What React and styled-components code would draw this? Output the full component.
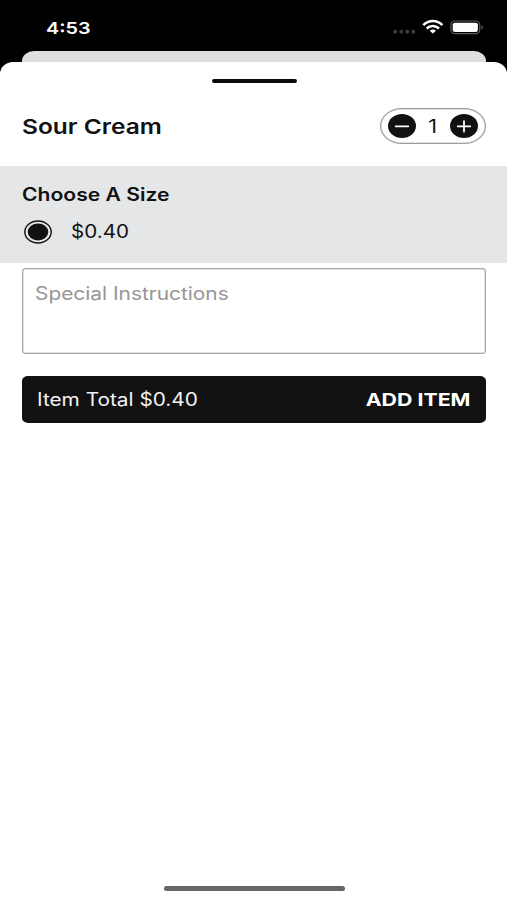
import React from "react";
import styled, { createGlobalStyle } from "styled-components";

const GlobalStyle = createGlobalStyle`
  * { box-sizing: border-box; }
  body { margin: 0; background: #000; font-family: Inter, "Liberation Sans", sans-serif; }
`;

const Screen = styled.div`
  height: 900px;
  display: flex;
  flex-direction: column;
  background: #000;
  overflow: hidden;
`;

const Label = styled.span`
  display: block;
  white-space: nowrap;
  font-size: ${(p) => p.$size}px;
  line-height: 24px;
  font-weight: ${(p) => p.$weight || 400};
  color: ${(p) => p.$color || "#111"};
  transform: scaleX(${(p) => p.$stretch || 1.2});
  transform-origin: ${(p) => p.$origin || "left"} center;
`;

const StatusBar = styled.header`
  height: 51px;
  flex: none;
  display: flex;
  justify-content: space-between;
  align-items: flex-start;
  padding: 16px 23px 0 46px;
`;

const StatusIcons = styled.div`
  display: flex;
  svg { display: block; }
`;

const BackCard = styled.div`
  height: 11px;
  flex: none;
  margin: 0 21px 0 22px;
  border-radius: 12px 12px 0 0 / 10px 10px 0 0;
  background: #dfdfdf;
`;

const Sheet = styled.main`
  flex: 1;
  display: flex;
  flex-direction: column;
  background: #fff;
  border-radius: 13px 13px 0 0 / 12px 12px 0 0;
`;

const Grabber = styled.div`
  width: 85px;
  height: 4px;
  margin: 17px 0 0 212px;
  border-radius: 2px;
  background: #0b0b0b;
`;

const TitleRow = styled.div`
  height: 83px;
  display: flex;
  justify-content: space-between;
  align-items: flex-start;
  padding: 25px 21px 0 22px;
`;

const Title = styled.div`
  padding-top: 7px;
`;

const Stepper = styled.div`
  width: 106px;
  height: 36px;
  display: flex;
  align-items: center;
  justify-content: space-between;
  padding: 0 7px;
  border: 1px solid #9c9c9c;
  border-radius: 22px / 18px;
  box-shadow: inset 0 0 0 0.5px #c4c4c4;
`;

const Quantity = styled.div`
  padding-top: 2px;
`;

const StepButton = styled.button`
  width: 28px;
  height: 24px;
  padding: 0;
  border: 0;
  border-radius: 50%;
  background: #111;
  svg { display: block; }
`;

const SizeSection = styled.section`
  height: 97px;
  padding: 17px 22px 0;
  background: #e4e6e8;
`;

const Option = styled.div`
  display: flex;
  align-items: center;
  gap: 19px;
  margin-top: 13px;
  padding-left: 2px;
`;

const Radio = styled.svg`
  display: block;
  width: 28px;
  height: 24px;
`;

const Instructions = styled.div`
  height: 86px;
  margin: 5px 21px 0 22px;
  padding: 13px 12px;
  border: 1px solid #a6a6a6;
  border-radius: 4px / 3px;
  box-shadow: inset 0 0 0 0.5px #c8c8c8;
`;

const AddButton = styled.button`
  height: 47px;
  margin: 22px 21px 0 22px;
  padding: 0 16px 0 15px;
  display: flex;
  justify-content: space-between;
  align-items: center;
  border: 0;
  border-radius: 6px / 5px;
  background: #111;
  font-family: inherit;
`;

const HomeIndicator = styled.div`
  width: 181px;
  height: 5px;
  margin: auto 0 9px 164px;
  border-radius: 3px;
  background: #666;
`;

function Status() {
  return (
    <StatusIcons>
      <svg width="92" height="24" viewBox="0 0 92 24">
        <g fill="#3c3c3c">
          <circle cx="3.2" cy="15.8" r="2" />
          <circle cx="9.2" cy="15.8" r="2" />
          <circle cx="15.3" cy="15.8" r="2" />
          <circle cx="21.3" cy="15.8" r="2" />
        </g>
        <g fill="none" stroke="#fff" strokeWidth="2.5">
          <path d="M31.3 9.2C36.7 3.7 45 3.7 50.4 9.2" />
          <path d="M34.7 12.5C38.3 9 43.4 9 47 12.5" />
        </g>
        <path d="M37.7 14.8C39.4 13.2 42.3 13.2 44 14.8L40.9 17.4Z" fill="#fff" />
        <rect x="58.9" y="5" width="28.8" height="12.6" rx="4.4" ry="3.7" fill="none" stroke="#5c5c5c" strokeWidth="1.2" />
        <rect x="60.7" y="6.7" width="25.2" height="9.2" rx="2.2" ry="1.9" fill="#fff" />
        <path d="M89.4 9.2Q91 10 91 11.3T89.4 13.4Z" fill="#5c5c5c" />
      </svg>
    </StatusIcons>
  );
}

function StepIcon({ plus }) {
  return (
    <svg width="28" height="24" viewBox="0 0 28 24" fill="none" stroke="#fff" strokeWidth="1.8" strokeLinecap="round">
      <path d="M7.7 12.3H20.3" />
      {plus && <path d="M14 7.1V17.5" />}
    </svg>
  );
}

export default function App() {
  return (
    <>
      <GlobalStyle />
      <Screen>
        <StatusBar>
          <Label $size={16.5} $weight={600} $color="#fff">4:53</Label>
          <Status />
        </StatusBar>
        <BackCard />
        <Sheet>
          <Grabber />
          <TitleRow>
            <Title>
              <Label $size={20.5} $weight={600} $stretch={1.195}>Sour Cream</Label>
            </Title>
            <Stepper>
              <StepButton aria-label="Decrease"><StepIcon /></StepButton>
              <Quantity>
                <Label $size={18} $origin="center">1</Label>
              </Quantity>
              <StepButton aria-label="Increase"><StepIcon plus /></StepButton>
            </Stepper>
          </TitleRow>
          <SizeSection>
            <Label $size={18} $weight={600} $stretch={1.172}>Choose A Size</Label>
            <Option>
              <Radio viewBox="0 0 28 24">
                <ellipse cx="14" cy="12" rx="13.2" ry="11" fill="none" stroke="#111" strokeWidth="1.4" />
                <ellipse cx="14" cy="12" rx="10.3" ry="8.5" fill="#111" />
              </Radio>
              <Label $size={18} $stretch={1.145}>$0.40</Label>
            </Option>
          </SizeSection>
          <Instructions>
            <Label $size={18} $stretch={1.16} $color="#969696">Special Instructions</Label>
          </Instructions>
          <AddButton>
            <Label $size={18} $stretch={1.155} $color="#f2f2f2">Item Total $0.40</Label>
            <Label $size={18} $stretch={1.185} $weight={700} $color="#fff" $origin="right">ADD ITEM</Label>
          </AddButton>
          <HomeIndicator />
        </Sheet>
      </Screen>
    </>
  );
}
